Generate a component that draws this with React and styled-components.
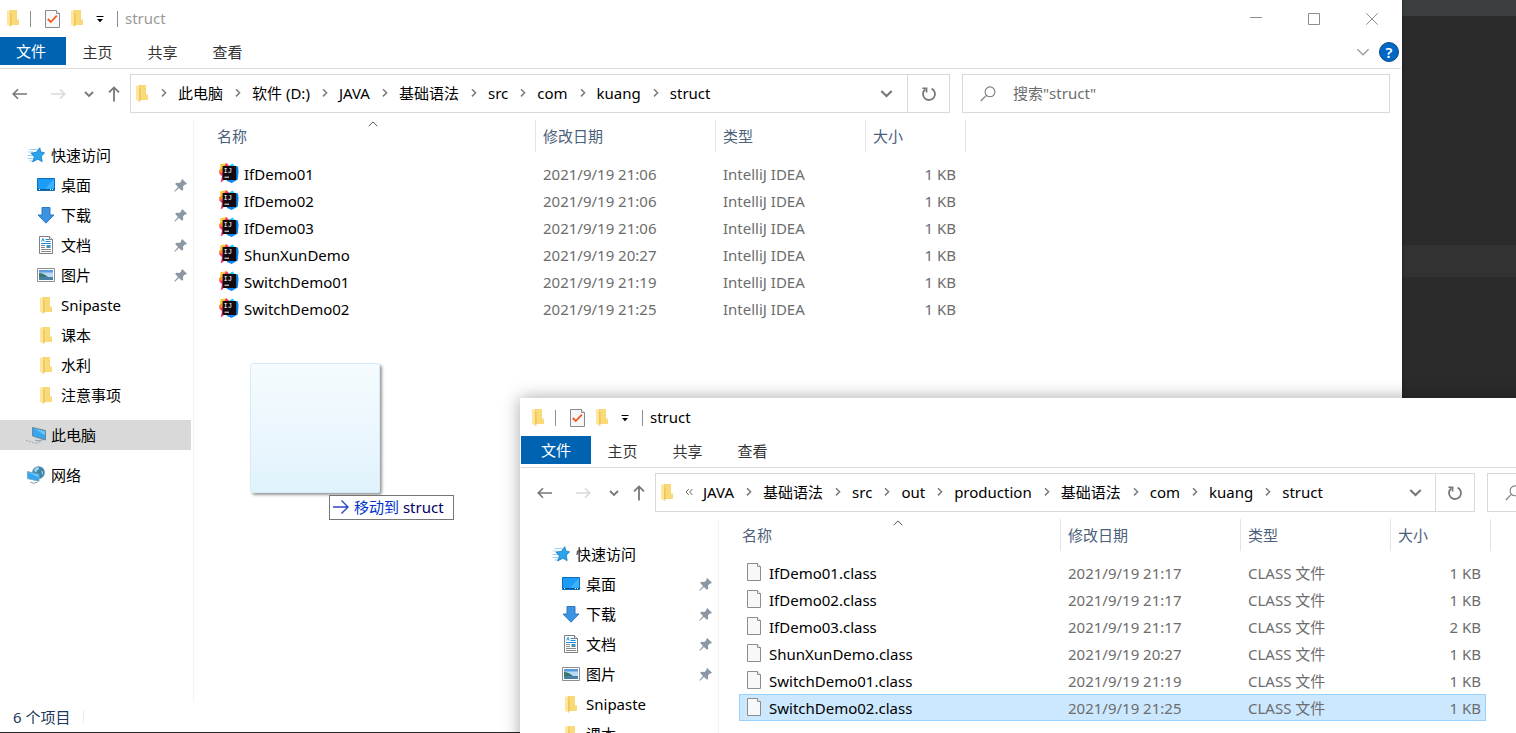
import React from 'react';
import styled, { createGlobalStyle } from 'styled-components';

const GlobalStyle = createGlobalStyle`
    * {
        box-sizing: border-box;
    }
    body {
        margin: 0;
        font-family: 'Noto Sans', 'Noto Sans CJK SC', sans-serif;
        font-size: 15px;
        line-height: 20px;
        color: #000;
    }
    button {
        font: inherit;
        color: inherit;
        padding: 0;
        border: 0;
        background: none;
    }
    svg {
        display: block;
        flex: none;
    }
`;

/* ---------- icons ---------- */

const FolderIcon = () => (
    <svg width="12" height="17" viewBox="0 0 12 17">
        <path d="M2.5 0h7.2v9.8H12V15H2.5z" fill="#efc55a" />
        <path d="M3.5 0h6.2v9.8H12V15H4.5z" fill="#f9d978" />
        <path d="M0 .3 3.4 1.8V17L0 14.8z" fill="#ffe59a" />
        <path d="M3.4 2.6V17l1-1V3.4z" fill="#eabd50" />
    </svg>
);

const CheckDocIcon = () => (
    <svg width="15" height="18" viewBox="0 0 15 18">
        <path d="M.5.5h11l3 3v14H.5z" fill="#f6f7fa" stroke="#8b8b8b" />
        <path d="M11.5.5v3h3" fill="#fff" stroke="#8b8b8b" />
        <path d="m2.8 9 3 3 6-6.4" fill="none" stroke="#f05a1c" strokeWidth="1.8" />
    </svg>
);

const QuickCaretIcon = () => (
    <svg width="8" height="8" viewBox="0 0 8 8">
        <path d="M.5 1.5h7" stroke="#000" strokeWidth="1" />
        <path d="M1 4h6L4 7.2z" fill="#000" />
    </svg>
);

const BackIcon = () => (
    <svg width="16" height="12" viewBox="0 0 16 12" fill="none" stroke="currentColor" strokeWidth="1.6">
        <path d="M1.2 6H15M6 1.2 1.2 6 6 10.8" />
    </svg>
);

const ForwardIcon = () => (
    <svg width="16" height="12" viewBox="0 0 16 12" fill="none" stroke="currentColor" strokeWidth="1.6">
        <path d="M14.8 6H1M10 1.2 14.8 6 10 10.8" />
    </svg>
);

const UpIcon = () => (
    <svg width="12" height="16" viewBox="0 0 12 16" fill="none" stroke="currentColor" strokeWidth="1.8">
        <path d="M6 1.4V15.5M1 6.4l5-5 5 5" />
    </svg>
);

const DownChevron = ({ size = 10, weight = 1.8 }) => (
    <svg width={size} height={size} viewBox="0 0 10 10" fill="none" stroke="currentColor" strokeWidth={weight}>
        <path d="m1 3 4 4 4-4" />
    </svg>
);

const RightChevron = () => (
    <svg width="6" height="10" viewBox="0 0 6 10" fill="none" stroke="#7b7b7b" strokeWidth="1.5">
        <path d="m1 1.2 3.6 3.6L1 8.4" />
    </svg>
);

const MoreIcon = () => (
    <svg width="8" height="8" viewBox="0 0 8 8" fill="none" stroke="#666" strokeWidth="1">
        <path d="M3.8 1 1 4l2.8 3M7.4 1 4.6 4l2.8 3" />
    </svg>
);

const RefreshIcon = () => (
    <svg width="16" height="16" viewBox="0 0 16 16" fill="none" stroke="#777" strokeWidth="1.8">
        <path d="M10.6 2.6a6 6 0 1 1-6.2.6" />
        <path d="M1.4 2.2h4.2v4.4" strokeWidth="1.6" />
    </svg>
);

const SearchIcon = () => (
    <svg width="16" height="16" viewBox="0 0 16 16" fill="none" stroke="#7a7a7a" strokeWidth="1.1">
        <circle cx="10" cy="5.8" r="4.9" />
        <path d="M6.4 9.4.8 15" />
    </svg>
);

const SortIcon = () => (
    <svg width="10" height="6" viewBox="0 0 10 6" fill="none" stroke="#555" strokeWidth="1">
        <path d="M.7 5.2 5 .9l4.3 4.3" />
    </svg>
);

const MinimizeIcon = () => (
    <svg width="12" height="12" viewBox="0 0 12 12" stroke="#8c8c8c">
        <path d="M0 4.5h12" />
    </svg>
);

const MaximizeIcon = () => (
    <svg width="12" height="12" viewBox="0 0 12 12" fill="none" stroke="#8c8c8c">
        <path d="M.5.5h11v11H.5z" />
    </svg>
);

const CloseIcon = () => (
    <svg width="12" height="12" viewBox="0 0 12 12" stroke="#8c8c8c">
        <path d="m.3.3 11.4 11.4M11.7.3.3 11.7" />
    </svg>
);

const StarIcon = () => (
    <svg width="18" height="16" viewBox="0 0 18 16">
        <path d="M2.5 2.5h8M1 5h5M.5 8.5h6M.5 11.5h5.5M2.5 14h4" stroke="#8ccbf3" strokeWidth=".9" />
        <path d="m12.8.7.9 4.2 3.9.9-3.2 3.4.7 5.5-4.2-2.5-5.3 2.7 1.8-5L4 6.2l5.4-.9z" fill="#2ba4ee" stroke="#1579c4" strokeWidth=".8" />
    </svg>
);

const DesktopIcon = () => (
    <svg width="18" height="14" viewBox="0 0 18 14">
        <path d="M.5.5h17v12H.5z" fill="#1c9cf6" stroke="#0b6cba" />
        <path d="M17 1v9L8 11z" fill="#3db2ff" />
        <path d="M1 11.5h16" stroke="#0a5a9c" />
        <path d="M2 11.5h1M13 11.5h1M15 11.5h1" stroke="#fff" />
    </svg>
);

const DownloadIcon = () => (
    <svg width="18" height="17" viewBox="0 0 18 17">
        <path d="M5 .5h8v7.5h4L9 16.2 1 8h4z" fill="#3b93e2" stroke="#2272bd" strokeWidth=".9" />
    </svg>
);

const DocumentIcon = () => (
    <svg width="18" height="18" viewBox="0 0 18 18">
        <path d="M2.5.5h10l3 3v14h-13z" fill="#fff" stroke="#808080" />
        <path d="M12.5.5v3h3" fill="#eee" stroke="#808080" />
        <path d="M4.5 5.5 6 2.5l1 3M8.5 3.5H12M4 7.5h10M8.5 5.5h5" stroke="#1f8fdc" fill="none" />
        <path d="M4 9.5h4M4 11.5h4M4 13.5h10M4 15.5h10" stroke="#8a8a8a" />
        <path d="M9.5 9h4v3h-4z" fill="#3e91b8" />
    </svg>
);

const PictureIcon = () => (
    <svg width="18" height="14" viewBox="0 0 18 14">
        <path d="M.5.5h17v13H.5z" fill="#fff" stroke="#8e8e8e" />
        <path d="M2 2h14v10H2z" fill="#b9dbf6" />
        <path d="M2 2h14v2.5H2z" fill="#5c9be0" />
        <path d="M2 5c3 0 6 1.5 9 4H2z" fill="#3a7770" />
        <path d="M2 9h14v3H2z" fill="#4b7fa5" />
    </svg>
);

const ComputerIcon = () => (
    <svg width="20" height="17" viewBox="0 0 20 17">
        <path d="m6.5.5 13 3v9.5l-13-4z" fill="#35a7f0" stroke="#68808f" strokeWidth=".9" />
        <path d="m8 1.6 11 2.6v4z" fill="#69c5fb" />
        <path d="m9 13 3 1 5-1.4" stroke="#8798a3" fill="none" />
        <path d="m0 13.4 10 3 5-1.4" stroke="#98a9b4" fill="none" strokeDasharray="2 1" />
    </svg>
);

const NetworkIcon = () => (
    <svg width="18" height="18" viewBox="0 0 18 18">
        <circle cx="11.5" cy="6.5" r="6.3" fill="#3f87ae" />
        <path d="M8 2c2-1.6 4-1 4 .6s-2.4 1.6-2.4 3-2.6 0-2.6-1.6zM14.4 5c2 0 2.2 2.4.8 4z" fill="#a5cfdf" />
        <path d="m.4 5.5 11.6 2.7v7L.4 12.6z" fill="#33a6ef" stroke="#6fa0bd" strokeWidth=".8" />
        <path d="m1 6.2 10.6 2.4v3z" fill="#6dc5f8" />
        <path d="m3.5 16 3 1.3 4-1" stroke="#8798a3" fill="none" />
    </svg>
);

const PinIcon = () => (
    <svg width="13" height="13" viewBox="0 0 13 13" fill="#8b98a3">
        <path d="M8.2 0 13 4.8l-1.6.9-.6-.1-1.8 2 .2 3.2-1.2 1L4.9 8.9l-3.7 3.5-1 .4.4-1L4 8 1.2 5l1-1.2 3.2.2 1.9-1.8-.1-.8z" />
    </svg>
);

const IdeaIcon = () => (
    <svg width="20" height="20" viewBox="0 0 20 20">
        <path d="M1.5 1.2 7 .2 11 4 6 11 .8 8.5z" fill="#fdc534" />
        <path d="m7.5 0 3.5 4-7 14-2.4 1.6L3 13.2 0 10l4-5z" fill="#fc3468" />
        <path d="M0 7 4 5.5v4L.2 9.5z" fill="#ff8b2c" />
        <path d="m10 2.6 3.6-2.2 2.6 3L14 8z" fill="#21c7f5" />
        <path d="m15 3 4 .6L19.6 8l-.8 8.4L12.6 20 8 18l-1-3h10z" fill="#0a85f4" />
        <path d="M3.6 3h13.6v14H3.6z" fill="#120a0e" />
        <text x="4.6" y="9.6" fill="#fff" fontFamily="Liberation Mono, monospace" fontSize="7">IJ</text>
        <path d="M5.5 14.2h4.5" stroke="#fff" />
    </svg>
);

const ClassFileIcon = () => (
    <svg width="20" height="18" viewBox="0 0 20 18">
        <path d="M3.5.5h10l3 3v14h-13z" fill="#f7f8f9" stroke="#8d8d8d" />
        <path d="M13.5.5v3h3" fill="#fff" stroke="#8d8d8d" />
    </svg>
);

const MoveIcon = () => (
    <svg width="16" height="14" viewBox="0 0 16 14" fill="none" stroke="#2b45c9" strokeWidth="1.4">
        <path d="M0 7h15M8.5.5 15 7l-6.5 6.5" />
    </svg>
);

/* ---------- desktop ---------- */

const Desktop = styled.main`
    position: relative;
    height: 100vh;
    overflow: hidden;
    background: #2b2b2b;
`;

const EditorBar = styled.div`
    height: 16px;
    background: #3c3f41;
`;

const EditorLine = styled.div`
    height: 32px;
    margin-top: 229px;
    background: #323232;
`;

const WindowFrame = styled.section`
    position: absolute;
    left: ${(p) => p.$left}px;
    top: ${(p) => p.$top}px;
    width: calc(100% - 109px);
    height: 100vh;
    display: flex;
    flex-direction: column;
    border: 1px solid #fff;
    background: #fff;
    box-shadow: 0 0 ${(p) => (p.$active ? '16px rgba(0, 0, 0, 0.35)' : '4px rgba(0, 0, 0, 0.4)')};
`;

const TitleBar = styled.header`
    display: flex;
    align-items: center;
    height: 37px;
    padding-left: 11px;
`;

const QuickTools = styled.div`
    display: flex;
    align-items: center;
    gap: 11px;
`;

const Divider = styled.span`
    width: 1px;
    height: 16px;
    background: #8f8f8f;
`;

const QuickButton = styled.button`
    display: flex;
    justify-content: center;
    min-width: 12px;
    margin-left: ${(p) => (p.$spaced ? 3 : 0)}px;
`;

const Title = styled.h1`
    margin: 0 auto 0 7px;
    padding-bottom: 2px;
    font-size: 15px;
    font-weight: 400;
    color: ${(p) => (p.$active ? '#000' : '#999')};
`;

const CaptionButton = styled.button`
    display: flex;
    align-items: center;
    justify-content: center;
    width: 58px;
    height: 36px;
`;

const Ribbon = styled.nav`
    display: flex;
    height: 32px;
    padding-right: 2px;
    border-bottom: 1px solid #dadbdc;
    color: #333;
`;

const FileTab = styled.button`
    width: 70px;
    height: 28px;
    background: #0063b1;
    color: #fff;
`;

const Tab = styled.button`
    width: 65px;
    height: 30px;
    padding-right: 2px;
`;

const RibbonEnd = styled.div`
    display: flex;
    align-items: center;
    gap: 9px;
    height: 30px;
    margin-left: auto;
    color: #9a9a9a;
`;

const HelpButton = styled.button`
    width: 20px;
    height: 20px;
    border: 1px solid #0b4a86;
    border-radius: 50%;
    background: #0067c5;
    color: #fff;
    font-size: 15px;
    font-weight: 600;
    line-height: 18px;
`;

const NavBar = styled.div`
    display: flex;
    height: 51px;
    padding: 5px 11px 7px 16px;
`;

const NavButtons = styled.div`
    display: flex;
    align-items: center;
    width: 118px;
    color: #777;
`;

const NavButton = styled.button`
    display: flex;
    margin-right: ${(p) => p.$gap || 0}px;
    color: ${(p) => (p.$faded ? '#dadada' : 'inherit')};
`;

const AddressBar = styled.div`
    flex: 1;
    display: flex;
    align-items: center;
    min-width: 0;
    padding-left: 5px;
    border: 1px solid #d9d9d9;
`;

const Crumbs = styled.ol`
    flex: 1;
    display: flex;
    align-items: center;
    margin: 0;
    padding: 0 0 2px;
    list-style: none;
    white-space: nowrap;
`;

const Crumb = styled.li`
    display: flex;
    align-items: center;
`;

const CrumbMark = styled.span`
    display: flex;
    justify-content: center;
    width: ${(p) => (p.$first ? 30 : 29)}px;
    padding-left: 1px;
`;

const CrumbLink = styled.a`
    color: #000;
    text-decoration: none;
`;

const AddressButton = styled.button`
    display: flex;
    align-items: center;
    justify-content: center;
    align-self: stretch;
    width: ${(p) => (p.$tight ? 39 : 42)}px;
    border-left: ${(p) => (p.$ruled ? '1px solid #d9d9d9' : '0')};
    color: #777;
`;

const SearchBox = styled.label`
    display: flex;
    align-items: center;
    gap: 17px;
    width: 428px;
    margin-left: 12px;
    padding: 0 17px;
    border: 1px solid #d9d9d9;
`;

const SearchInput = styled.input`
    flex: 1;
    min-width: 0;
    padding: 0 0 2px;
    border: 0;
    outline: 0;
    font: inherit;

    &::placeholder {
        color: #6d6d6d;
        opacity: 1;
    }
`;

const Body = styled.div`
    flex: 1;
    display: flex;
    min-height: 0;
`;

const Sidebar = styled.aside`
    width: 198px;
    padding: 20px 2px 0 0;
    border-right: 1px solid #f3f3f3;
    overflow: hidden;
`;

const SideGroup = styled.ul`
    margin: 0 0 10px;
    padding: 0;
    list-style: none;
`;

const SideItem = styled.li`
    display: flex;
    align-items: center;
    gap: 6px;
    height: 30px;
    padding: 0 4px 0 ${(p) => (p.$nested ? 41 : 31)}px;
    background: ${(p) => (p.$current ? '#d9d9d9' : 'none')};
`;

const SideIcon = styled.span`
    display: flex;
    justify-content: center;
    width: 18px;
`;

const SideLink = styled.a`
    flex: 1;
    color: #000;
    text-decoration: none;
    white-space: nowrap;
`;

const Files = styled.div`
    flex: 1;
    padding-left: 15px;
`;

const FileTable = styled.table`
    display: block;
`;

const FileHead = styled.thead`
    display: block;
    margin-bottom: 8px;
`;

const FileBody = styled.tbody`
    display: block;
`;

const HeadRow = styled.tr`
    display: grid;
    grid-template-columns: 327px 180px 150px 100px;
    height: 32px;
`;

const HeadCell = styled.th`
    position: relative;
    padding: 6px ${(p) => (p.$sorted ? 8 : 7)}px;
    border-right: 1px solid #e5e5e5;
    color: #4c607a;
    font-weight: 400;
    text-align: left;

    svg {
        position: absolute;
        top: 1px;
        left: 159px;
    }
`;

const FileRow = styled.tr`
    display: grid;
    grid-template-columns: 322px 180px 150px 95px;
    align-items: center;
    width: 747px;
    height: 27px;
    margin-left: 5px;
    background: ${(p) => (p.$selected ? '#cce8ff' : 'none')};
    outline: ${(p) => (p.$selected ? '1px solid #99d1ff' : '0')};
    outline-offset: -1px;
`;

const NameCell = styled.td`
    display: flex;
    align-items: center;
    gap: 5px;
    padding: 0 5px;

    svg {
        margin-bottom: 2px;
    }
`;

const Cell = styled.td`
    padding: 0 5px 0 7px;
    color: #6d6d6d;
    text-align: ${(p) => (p.$right ? 'right' : 'left')};
`;

const StatusBar = styled.footer`
    display: flex;
    align-items: center;
    gap: 12px;
    height: 29px;
    padding: 0 17px;
    color: #1e395b;

    &::after {
        content: '';
        width: 1px;
        height: 13px;
        background: #ececec;
    }
`;

const DragGhost = styled.div`
    position: absolute;
    left: 250px;
    top: 363px;
    width: 130px;
    height: 130px;
    border: 1px solid #d3eefa;
    border-radius: 3px;
    background: linear-gradient(#f5fbfe, #eaf6fd 60%, #e0f2fc);
    box-shadow: 2px 2px 3px rgba(0, 0, 0, 0.4);
`;

const DragTip = styled.div`
    position: absolute;
    left: 329px;
    top: 495px;
    display: flex;
    align-items: center;
    gap: 5px;
    height: 25px;
    padding: 0 9px 2px 3px;
    border: 1px solid #767676;
    background: #fff;
    color: #0033cc;
    white-space: pre;
`;

const DragTarget = styled.span`
    color: #000066;
`;

/* ---------- data ---------- */

const quickAccess = [
    { name: '桌面', Icon: DesktopIcon, pinned: true },
    { name: '下载', Icon: DownloadIcon, pinned: true },
    { name: '文档', Icon: DocumentIcon, pinned: true },
    { name: '图片', Icon: PictureIcon, pinned: true },
    { name: 'Snipaste', Icon: FolderIcon },
    { name: '课本', Icon: FolderIcon },
    { name: '水利', Icon: FolderIcon },
    { name: '注意事项', Icon: FolderIcon },
];

const sourceFiles = [
    { name: 'IfDemo01', date: '2021/9/19 21:06', size: '1 KB' },
    { name: 'IfDemo02', date: '2021/9/19 21:06', size: '1 KB' },
    { name: 'IfDemo03', date: '2021/9/19 21:06', size: '1 KB' },
    { name: 'ShunXunDemo', date: '2021/9/19 20:27', size: '1 KB' },
    { name: 'SwitchDemo01', date: '2021/9/19 21:19', size: '1 KB' },
    { name: 'SwitchDemo02', date: '2021/9/19 21:25', size: '1 KB' },
];

const classFiles = [
    { name: 'IfDemo01.class', date: '2021/9/19 21:17', size: '1 KB' },
    { name: 'IfDemo02.class', date: '2021/9/19 21:17', size: '1 KB' },
    { name: 'IfDemo03.class', date: '2021/9/19 21:17', size: '2 KB' },
    { name: 'ShunXunDemo.class', date: '2021/9/19 20:27', size: '1 KB' },
    { name: 'SwitchDemo01.class', date: '2021/9/19 21:19', size: '1 KB' },
    { name: 'SwitchDemo02.class', date: '2021/9/19 21:25', size: '1 KB', selected: true },
];

/* ---------- explorer window ---------- */

const SideEntry = ({ name, Icon, pinned, nested, current }) => (
    <SideItem $nested={nested} $current={current}>
        <SideIcon><Icon /></SideIcon>
        <SideLink href="#">{name}</SideLink>
        {pinned && <PinIcon />}
    </SideItem>
);

const Explorer = ({ left, top, active, path, truncated, files, type, FileIcon, current }) => (
    <WindowFrame $left={left} $top={top} $active={active}>
        <TitleBar>
            <QuickTools>
                <FolderIcon />
                <Divider />
                <QuickButton $spaced aria-label="属性"><CheckDocIcon /></QuickButton>
                <QuickButton aria-label="新建文件夹"><FolderIcon /></QuickButton>
                <QuickButton aria-label="自定义快速访问工具栏"><QuickCaretIcon /></QuickButton>
                <Divider />
            </QuickTools>
            <Title $active={active}>struct</Title>
            <CaptionButton aria-label="最小化"><MinimizeIcon /></CaptionButton>
            <CaptionButton aria-label="最大化"><MaximizeIcon /></CaptionButton>
            <CaptionButton aria-label="关闭"><CloseIcon /></CaptionButton>
        </TitleBar>
        <Ribbon>
            <FileTab>文件</FileTab>
            <Tab>主页</Tab>
            <Tab>共享</Tab>
            <Tab>查看</Tab>
            <RibbonEnd>
                <DownChevron size={14} weight={0.9} />
                <HelpButton aria-label="帮助">?</HelpButton>
            </RibbonEnd>
        </Ribbon>
        <NavBar>
            <NavButtons>
                <NavButton $gap={22} aria-label="后退"><BackIcon /></NavButton>
                <NavButton $gap={18} $faded aria-label="前进"><ForwardIcon /></NavButton>
                <NavButton $gap={14} aria-label="最近位置"><DownChevron /></NavButton>
                <NavButton aria-label="上移"><UpIcon /></NavButton>
            </NavButtons>
            <AddressBar>
                <FolderIcon />
                <Crumbs>
                    {path.map((part, i) => (
                        <Crumb key={i}>
                            <CrumbMark $first={i === 0}>
                                {i === 0 && truncated ? <MoreIcon /> : <RightChevron />}
                            </CrumbMark>
                            <CrumbLink href="#">{part}</CrumbLink>
                        </Crumb>
                    ))}
                </Crumbs>
                <AddressButton $tight={truncated} aria-label="以前的位置">
                    <DownChevron size={13} weight={1.6} />
                </AddressButton>
                <AddressButton $tight={truncated} $ruled aria-label="刷新"><RefreshIcon /></AddressButton>
            </AddressBar>
            <SearchBox>
                <SearchIcon />
                <SearchInput type="text" aria-label="搜索" placeholder={'搜索"struct"'} />
            </SearchBox>
        </NavBar>
        <Body>
            <Sidebar>
                <SideGroup>
                    <SideEntry name="快速访问" Icon={StarIcon} />
                    {quickAccess.map((item) => (
                        <SideEntry key={item.name} nested {...item} />
                    ))}
                </SideGroup>
                <SideGroup>
                    <SideEntry name="此电脑" Icon={ComputerIcon} current={current} />
                </SideGroup>
                <SideGroup>
                    <SideEntry name="网络" Icon={NetworkIcon} />
                </SideGroup>
            </Sidebar>
            <Files>
                <FileTable>
                    <FileHead>
                        <HeadRow>
                            <HeadCell $sorted>名称<SortIcon /></HeadCell>
                            <HeadCell>修改日期</HeadCell>
                            <HeadCell>类型</HeadCell>
                            <HeadCell>大小</HeadCell>
                        </HeadRow>
                    </FileHead>
                    <FileBody>
                        {files.map((file) => (
                            <FileRow key={file.name} $selected={file.selected}>
                                <NameCell><FileIcon />{file.name}</NameCell>
                                <Cell>{file.date}</Cell>
                                <Cell>{type}</Cell>
                                <Cell $right>{file.size}</Cell>
                            </FileRow>
                        ))}
                    </FileBody>
                </FileTable>
            </Files>
        </Body>
        <StatusBar>{files.length} 个项目</StatusBar>
    </WindowFrame>
);

const App = () => {
    return (
        <>
            <GlobalStyle />
            <Desktop>
                <EditorBar />
                <EditorLine />
                <Explorer
                    left={-5}
                    top={-1}
                    path={['此电脑', '软件 (D:)', 'JAVA', '基础语法', 'src', 'com', 'kuang', 'struct']}
                    files={sourceFiles}
                    type="IntelliJ IDEA"
                    FileIcon={IdeaIcon}
                    current
                />
                <DragGhost />
                <Explorer
                    left={520}
                    top={398}
                    active
                    truncated
                    path={['JAVA', '基础语法', 'src', 'out', 'production', '基础语法', 'com', 'kuang', 'struct']}
                    files={classFiles}
                    type="CLASS 文件"
                    FileIcon={ClassFileIcon}
                />
                <DragTip>
                    <MoveIcon />
                    <span>移动到 <DragTarget>struct</DragTarget></span>
                </DragTip>
            </Desktop>
        </>
    );
};

export default App;
